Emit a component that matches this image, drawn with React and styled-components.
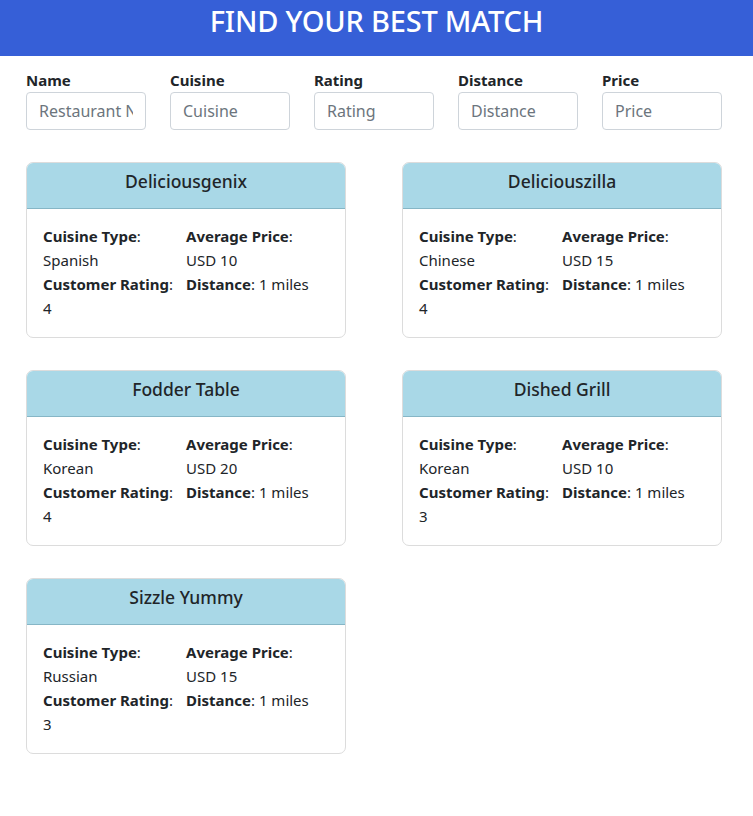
import React from 'react'
import styled, { createGlobalStyle } from 'styled-components'

const GlobalStyle = createGlobalStyle`
  body {
    margin: 0;
    font-family: 'Noto Sans', 'Open Sans', sans-serif;
    color: #212529;
    background: #fff;
  }
  * { box-sizing: border-box; }
`

const restaurants = [
  { name: 'Deliciousgenix', cuisine: 'Spanish', price: 10, rating: 4, distance: 1 },
  { name: 'Deliciouszilla', cuisine: 'Chinese', price: 15, rating: 4, distance: 1 },
  { name: 'Fodder Table', cuisine: 'Korean', price: 20, rating: 4, distance: 1 },
  { name: 'Dished Grill', cuisine: 'Korean', price: 10, rating: 3, distance: 1 },
  { name: 'Sizzle Yummy', cuisine: 'Russian', price: 15, rating: 3, distance: 1 },
]

const filters = [
  { label: 'Name', placeholder: 'Restaurant Name' },
  { label: 'Cuisine', placeholder: 'Cuisine' },
  { label: 'Rating', placeholder: 'Rating' },
  { label: 'Distance', placeholder: 'Distance' },
  { label: 'Price', placeholder: 'Price' },
]

const Header = styled.header`
  background: #365fd7;
  height: 56px;
  padding-top: 1px;
  text-align: center;
  h1 {
    margin: 0;
    color: #fff;
    font-size: 29px;
    line-height: 40px;
    font-weight: 500;
    letter-spacing: -0.2px;
  }
`
const Main = styled.main`
  padding: 12px 26px 40px;
`
const FilterRow = styled.div`
  display: flex;
  gap: 24px;
  margin-bottom: 32px;
`
const Field = styled.label`
  display: flex;
  flex-direction: column;
  width: 120px;
  span {
    font-weight: 700;
    font-size: 15px;
    line-height: 24px;
  }
`
const Input = styled.input`
  width: 120px;
  height: 38px;
  padding: 6px 12px;
  border: 1px solid #ced4da;
  border-radius: 4px;
  font-family: inherit;
  font-size: 16px;
  color: #212529;
  &::placeholder {
    color: #6c757d;
  }
`
const CardGrid = styled.div`
  display: grid;
  grid-template-columns: 320px 320px;
  column-gap: 56px;
  row-gap: 32px;
`
const Card = styled.div`
  border: 1px solid #dcdcdc;
  border-radius: 7px;
  overflow: hidden;
`
const CardTitle = styled.div`
  background: #a9d8e7;
  border-bottom: 1px solid #86b6c6;
  height: 46px;
  padding-top: 6px;
  text-align: center;
  font-size: 17.5px;
  font-weight: 500;
`
const CardBody = styled.div`
  display: grid;
  grid-template-columns: 143px 1fr;
  padding: 15px 16px 17px;
  font-size: 15px;
  line-height: 24px;
`
const Stat = styled.div`
  white-space: nowrap;
  b { font-weight: 700; }
`

function StatItem({ label, value, stacked }) {
  return (
    <Stat>
      <b>{label}</b>:{stacked ? <br /> : ' '}
      {value}
    </Stat>
  )
}

export default function App() {
  return (
    <>
      <GlobalStyle />
      <Header>
        <h1>FIND YOUR BEST MATCH</h1>
      </Header>
      <Main>
        <FilterRow>
          {filters.map((f) => (
            <Field key={f.label}>
              <span>{f.label}</span>
              <Input placeholder={f.placeholder} />
            </Field>
          ))}
        </FilterRow>
        <CardGrid>
          {restaurants.map((r) => (
            <Card key={r.name}>
              <CardTitle>{r.name}</CardTitle>
              <CardBody>
                <StatItem label="Cuisine Type" value={r.cuisine} stacked />
                <StatItem label="Average Price" value={`USD ${r.price}`} stacked />
                <StatItem label="Customer Rating" value={r.rating} stacked />
                <StatItem label="Distance" value={`${r.distance} miles`} />
              </CardBody>
            </Card>
          ))}
        </CardGrid>
      </Main>
    </>
  )
}
